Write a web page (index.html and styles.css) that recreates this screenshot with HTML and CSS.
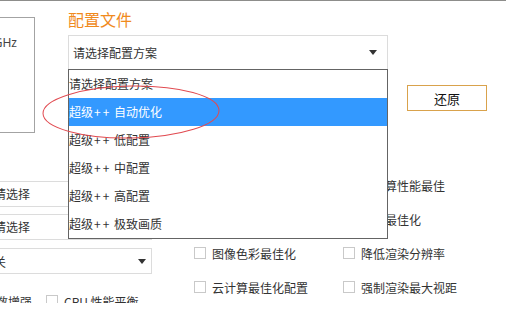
FILE: index.html
```html
<!DOCTYPE html>
<html lang="zh-CN">

<head>
    <meta charset="UTF-8">
    <title>配置文件</title>
    <link rel="stylesheet" href="styles.css">
</head>

<body>
    <div class="topbar"></div>
    <div class="page">
        <div class="upper">
            <div class="info"><span class="info-text">3.60GHz</span></div>
            <div class="config">
                <h2 class="config-title">配置文件</h2>
                <div class="select main-select"><span>请选择配置方案</span><i class="caret"></i></div>
                <ul class="dropdown">
                    <li>请选择配置方案</li>
                    <li class="on">超级<span class="plus">++</span> 自动优化</li>
                    <li>超级<span class="plus">++</span> 低配置</li>
                    <li>超级<span class="plus">++</span> 中配置</li>
                    <li>超级<span class="plus">++</span> 高配置</li>
                    <li>超级<span class="plus">++</span> 极致画质</li>
                </ul>
            </div>
            <button class="btn-restore">还原</button>
        </div>
        <div class="lower">
            <div class="left-col">
                <div class="field">请选择</div>
                <div class="field">请选择</div>
                <div class="select small-select"><span>关</span><i class="caret"></i></div>
                <div class="opt-row">
                    <label class="opt"><i class="box"></i>帧数增强</label>
                    <label class="opt"><i class="box"></i>CPU 性能平衡</label>
                </div>
            </div>
            <div class="options">
                <label class="opt"><i class="box"></i>多核运算最佳化</label>
                <label class="opt"><i class="box"></i>云计算性能最佳</label>
                <label class="opt"><i class="box"></i>内存释放最佳化</label>
                <label class="opt"><i class="box"></i>画质最佳化</label>
                <label class="opt"><i class="box"></i>图像色彩最佳化</label>
                <label class="opt"><i class="box"></i>降低渲染分辨率</label>
                <label class="opt"><i class="box"></i>云计算最佳化配置</label>
                <label class="opt"><i class="box"></i>强制渲染最大视距</label>
            </div>
        </div>
    </div>
    <svg class="mark" width="506" height="314" viewBox="0 0 506 314">
        <ellipse cx="131" cy="112" rx="88" ry="26" fill="none" stroke="#e14a50" stroke-width="1" transform="rotate(-1 131 112)" />
    </svg>
</body>

</html>
```

FILE: styles.css
```css
* {
    margin: 0;
    padding: 0;
    list-style: none;
    box-sizing: border-box;
}

body {
    width: 506px;
    height: 314px;
    overflow: hidden;
    position: relative;
    background: #fff;
    color: #333;
    font-family: "Noto Sans CJK SC", "Noto Sans", sans-serif;
    font-size: 12px;
}

.topbar {
    height: 1px;
    background: #8d8d8b;
}

.upper {
    display: flex;
    align-items: flex-start;
    height: 167px;
}

.info {
    width: 120px;
    height: 116px;
    margin-top: 16px;
    margin-left: -85px;
    border: 1px solid #a3a3a3;
}

.info-text {
    display: block;
    padding-top: 18px;
    padding-right: 17px;
    text-align: right;
    line-height: 14px;
    font-family: "Noto Sans", sans-serif;
    font-size: 12px;
    color: #444;
}

.config {
    position: relative;
    width: 320px;
    margin-left: 33px;
}

.config-title {
    padding-top: 8px;
    font-size: 16px;
    line-height: 20px;
    font-weight: normal;
    color: #f08a1d;
}

.select {
    display: flex;
    align-items: center;
    justify-content: space-between;
    border: 1px solid #dcdcdc;
}

.main-select {
    height: 35px;
    margin-top: 6px;
    padding-left: 4px;
}

.caret {
    width: 0;
    height: 0;
    margin-right: 10px;
    border-left: 4px solid transparent;
    border-right: 4px solid transparent;
    border-top: 5px solid #333;
}

.dropdown {
    position: absolute;
    top: 68px;
    left: 0;
    width: 320px;
    border: 1px solid #646464;
    background: #fff;
    z-index: 2;
}

.dropdown li {
    height: 28px;
    line-height: 28px;
    color: #333;
}

.dropdown .on {
    background: #3399ff;
    color: #fff;
}

.plus {
    letter-spacing: 2px;
    padding-left: 1px;
}

.btn-restore {
    width: 80px;
    height: 26px;
    margin-top: 84px;
    margin-left: 19px;
    border: 1px solid #d9a24c;
    background: #fff;
    color: #111;
    font-family: "Noto Sans CJK SC", sans-serif;
    font-size: 13px;
}

.lower {
    display: flex;
    align-items: flex-start;
    height: 135px;
    overflow: hidden;
}

.left-col {
    width: 200px;
    flex-shrink: 0;
    margin-left: -48px;
    padding-top: 13px;
}

.field {
    height: 26px;
    line-height: 24px;
    padding-left: 41px;
    border: 1px solid #dcdcdc;
    margin-bottom: 7px;
}

.small-select {
    height: 26px;
    margin-top: 8px;
    padding-left: 41px;
}

.small-select .caret {
    margin-right: 5px;
}

.opt-row {
    display: flex;
    gap: 14px;
    margin-top: 21px;
    padding-left: 14px;
}

.opt {
    display: flex;
    align-items: center;
    height: 12px;
    white-space: nowrap;
}

.box {
    width: 12px;
    height: 12px;
    margin-right: 6px;
    border: 1px solid #c9c9c9;
    background: #fff;
    flex-shrink: 0;
}

.options {
    display: grid;
    grid-template-columns: 149px 149px;
    grid-auto-rows: 34px;
    margin-left: 42px;
}

.options .opt {
    height: 34px;
}

.mark {
    position: absolute;
    left: 0;
    top: 0;
    z-index: 3;
    pointer-events: none;
}
```
